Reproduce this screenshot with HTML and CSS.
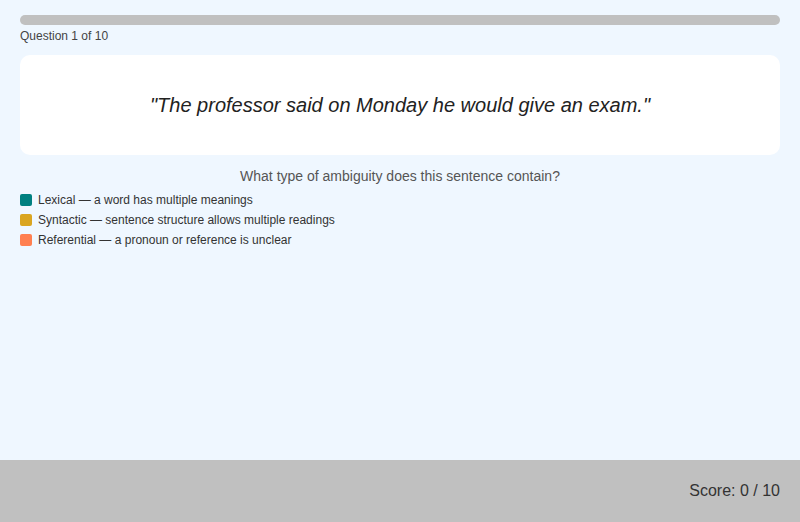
FILE: index.html
```html
<!DOCTYPE html>
<html>
<head>
<meta charset="utf-8">
<link rel="stylesheet" href="styles.css">
</head>
<body>
<div class="page">
  <main class="main">
    <div class="progress"><div class="progress-fill" style="width:0%"></div></div>
    <div class="counter">Question 1 of 10</div>
    <div class="card">
      <p class="quote">"The professor said on Monday he would give an exam."</p>
    </div>
    <p class="prompt">What type of ambiguity does this sentence contain?</p>
    <ul class="legend">
      <li class="legend-item"><span class="swatch swatch-lexical"></span>Lexical — a word has multiple meanings</li>
      <li class="legend-item"><span class="swatch swatch-syntactic"></span>Syntactic — sentence structure allows multiple readings</li>
      <li class="legend-item"><span class="swatch swatch-referential"></span>Referential — a pronoun or reference is unclear</li>
    </ul>
  </main>
  <footer class="footer">Score: 0 / 10</footer>
</div>
</body>
</html>
```
FILE: styles.css
```css
html, body {
  margin: 0;
  padding: 0;
  height: 100%;
}
body {
  background: #eff7ff;
  font-family: "Liberation Sans", Arial, sans-serif;
  color: #333;
}
.page {
  display: flex;
  flex-direction: column;
  height: 100%;
}
.main {
  flex: 1;
  padding: 15px 20px 0;
}
.progress {
  height: 10px;
  border-radius: 5px;
  background: #c0c0c0;
  overflow: hidden;
}
.progress-fill {
  height: 100%;
  background: #008080;
}
.counter {
  margin-top: 4px;
  font-size: 12px;
  line-height: 14px;
  color: #444;
}
.card {
  margin-top: 12px;
  height: 100px;
  background: #fff;
  border-radius: 10px;
  display: flex;
  align-items: center;
  justify-content: center;
}
.quote {
  margin: 0;
  font-style: italic;
  font-size: 20px;
  color: #222;
}
.prompt {
  margin: 13px 0 0;
  text-align: center;
  font-size: 14px;
  line-height: 16px;
  color: #555;
}
.legend {
  list-style: none;
  margin: 6px 0 0;
  padding: 0;
}
.legend-item {
  display: flex;
  align-items: center;
  gap: 6px;
  height: 20px;
  font-size: 12px;
  color: #333;
}
.swatch {
  width: 12px;
  height: 12px;
  border-radius: 2px;
}
.swatch-lexical { background: #008080; }
.swatch-syntactic { background: #daa520; }
.swatch-referential { background: #ff7f50; }
.footer {
  height: 62px;
  background: #c0c0c0;
  display: flex;
  align-items: center;
  justify-content: flex-end;
  padding: 0 20px;
  font-size: 16px;
  color: #333;
}
```
